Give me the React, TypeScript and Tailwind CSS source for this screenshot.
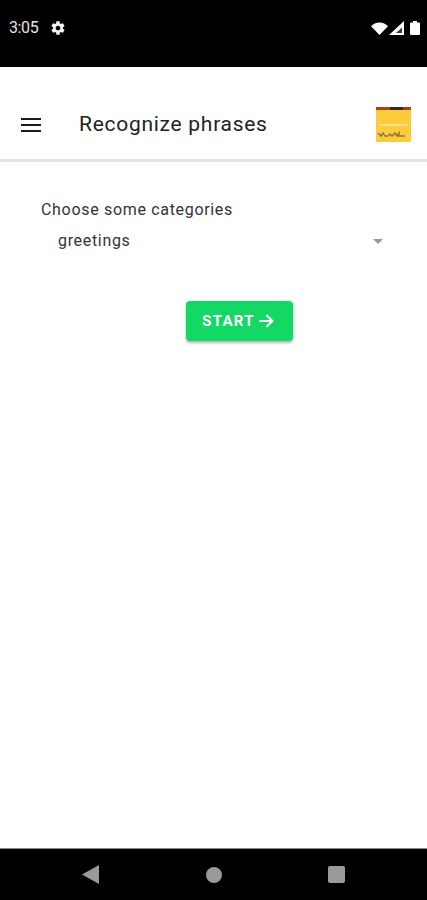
import React from "react";

function StatusBar() {
  return (
    <div className="h-[67px] bg-black flex items-start justify-between pt-[18px] pl-[9px] pr-[7px] text-[#e4e4e4]">
      <div className="flex items-center gap-[12px] h-[20px]">
        <span className="text-[16px] leading-[20px] tracking-[-0.4px]">3:05</span>
        <svg width="16" height="16" viewBox="0 0 24 24" fill="#f2f2f2">
          <path d="M19.43 12.98c.04-.32.07-.64.07-.98s-.03-.66-.07-.98l2.11-1.65c.19-.15.24-.42.12-.64l-2-3.46c-.12-.22-.39-.3-.61-.22l-2.49 1c-.52-.4-1.08-.73-1.69-.98l-.38-2.65C14.46 2.18 14.25 2 14 2h-4c-.25 0-.46.18-.49.42l-.38 2.65c-.61.25-1.17.59-1.69.98l-2.49-1c-.23-.09-.49 0-.61.22l-2 3.46c-.13.22-.07.49.12.64l2.11 1.65c-.04.32-.07.65-.07.98s.03.66.07.98l-2.11 1.65c-.19.15-.24.42-.12.64l2 3.46c.12.22.39.3.61.22l2.49-1c.52.4 1.08.73 1.69.98l.38 2.65c.03.24.24.42.49.42h4c.25 0 .46-.18.49-.42l.38-2.65c.61-.25 1.17-.59 1.69-.98l2.49 1c.23.09.49 0 .61-.22l2-3.46c.12-.22.07-.49-.12-.64l-2.11-1.65zM12 15.5c-1.93 0-3.5-1.57-3.5-3.5s1.57-3.5 3.5-3.5 3.5 1.57 3.5 3.5-1.57 3.5-3.5 3.5z" />
        </svg>
      </div>
      <div className="flex items-center h-[20px]">
        <svg width="17" height="13" viewBox="0 0 17 13" fill="#fff">
          <path d="M0 4.200C2.100 1.800 5.200.4 8.500.4s6.400 1.400 8.500 3.800L8.500 13z" />
        </svg>
        <svg width="15" height="14" viewBox="0 0 15 14" className="ml-[1px]">
          <path d="M0 14 15 0v14z" fill="#fff" />
          <path d="M7 12h6V6.400z" fill="#3a3a3a" />
        </svg>
        <svg width="10" height="14" viewBox="0 0 10 14" fill="#fff" className="ml-[6px]">
          <path d="M3 0h4v1.400h2a1 1 0 0 1 1 1V13a1 1 0 0 1-1 1H1a1 1 0 0 1-1-1V2.400a1 1 0 0 1 1-1h2z" />
        </svg>
      </div>
    </div>
  );
}

function Logo() {
  return (
    <svg width="35" height="35" viewBox="0 0 35 35">
      <rect width="35" height="35" fill="#fdcb3c" />
      <rect width="35" height="3" fill="#a5431f" />
      <rect x="14" width="13" height="3" fill="#3a2a1a" />
      <rect x="3" y="17" width="29" height="2" fill="#fde08a" />
      <path
        d="M2 26l3 3 2-3 2 3h3l2-2 2 2 3-3 2 3 2-3v3h6"
        fill="none"
        stroke="#8a7a3c"
        strokeWidth="1.500"
      />
    </svg>
  );
}

function Header() {
  return (
    <header className="h-[95px] bg-white border-b-[3px] border-[#e3e3e3] flex items-center pl-[21px] pr-[16px] pt-[23px]">
      <div className="w-[20px] h-[14px] flex flex-col justify-between">
        <div className="h-[2px] bg-[#1a1a1a]" />
        <div className="h-[2px] bg-[#1a1a1a]" />
        <div className="h-[2px] bg-[#1a1a1a]" />
      </div>
      <h1 className="ml-[38px] flex-1 text-[21px] font-normal tracking-[0.72px] text-[#222]">
        Recognize phrases
      </h1>
      <Logo />
    </header>
  );
}

function NavBar() {
  return (
    <div className="h-[52px] bg-black border-t-[1px] border-[#8c8c8c] flex items-center justify-start pl-[82px]">
      <div className="w-[263px] flex items-center justify-between">
        <svg width="17" height="19" viewBox="0 0 17 19" fill="#9a9a9a">
          <path d="M17 0v19L0 9.500z" />
        </svg>
        <div className="w-[16px] h-[16px] rounded-full bg-[#9a9a9a]" />
        <div className="w-[17px] h-[17px] rounded-[2px] bg-[#9a9a9a]" />
      </div>
    </div>
  );
}

export default function App() {
  return (
    <div className="w-[427px] h-[900px] flex flex-col bg-white font-['Roboto',sans-serif] overflow-hidden">
      <StatusBar />
      <Header />
      <main className="flex-1 pt-[36px]">
        <p className="pl-[41px] text-[16px] leading-[24px] tracking-[0.68px] text-[#333]">
          Choose some categories
        </p>
        <div className="mt-[7px] pl-[58px] pr-[44px] flex items-center justify-between h-[24px]">
          <span className="text-[16px] tracking-[0.68px] text-[#333]">greetings</span>
          <div className="w-0 h-0 border-l-[5px] border-r-[5px] border-t-[5px] border-l-transparent border-r-transparent border-t-[#9a9a9a]" />
        </div>
        <div className="mt-[48px] pl-[186px]">
          <button className="w-[107px] h-[40px] rounded-[4px] bg-[#14d864] shadow-[0_2px_3px_rgba(0,0,0,0.3)] flex items-center justify-center gap-[2px] text-white text-[15px] font-bold tracking-[1.2px] pr-[2px]">
            START
            <svg width="18" height="18" viewBox="0 0 24 24" fill="none" stroke="#fff" strokeWidth="2.800">
              <path d="M3 12h17M12.500 4l8 8-8 8" />
            </svg>
          </button>
        </div>
      </main>
      <NavBar />
    </div>
  );
}
